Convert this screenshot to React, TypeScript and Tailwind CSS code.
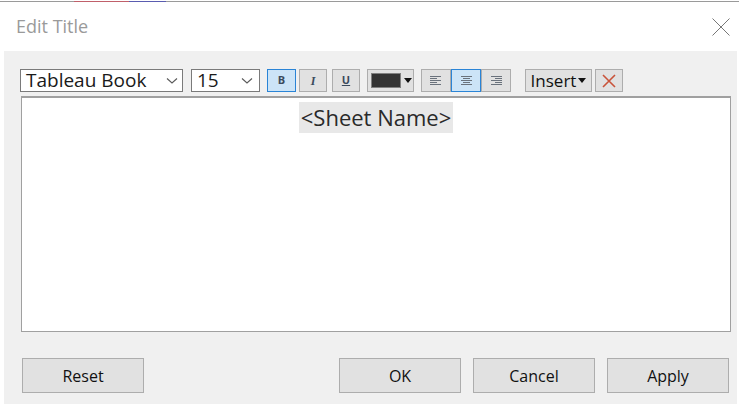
import React from "react";

// --- Small drawings ---

const Chevron = () => (
  <svg width="12" height="8" viewBox="0 0 12 8" className="shrink-0">
    <path d="M1 1.5 L6 6 L11 1.5" fill="none" stroke="#5a5a5a" strokeWidth="1.1" />
  </svg>
);

const Caret = () => (
  <svg width="8" height="5" viewBox="0 0 8 5" className="shrink-0">
    <path d="M0 0 H8 L4 5 Z" fill="#111" />
  </svg>
);

const AlignIcon = ({ mode }: { mode: "left" | "center" | "right" }) => {
  const rows = [11, 7, 11, 7, 11];
  return (
    <svg width="12" height="11" viewBox="0 0 12 11" shapeRendering="crispEdges">
      {rows.map((w, i) => {
        const x = mode === "left" ? 0 : mode === "right" ? 12 - w : Math.round((12 - w) / 2);
        return <rect key={i} x={x} y={i * 2 + 1} width={w} height="1" fill="#6a727c" />;
      })}
    </svg>
  );
};

// --- Sub-components ---

const ToolButton = ({
  children,
  active = false,
  className = "",
}: {
  children: React.ReactNode;
  active?: boolean;
  className?: string;
}) => (
  <div
    className={`flex h-[23px] items-center justify-center border ${
      active ? "border-[#2a84d6] bg-[#cce4f7]" : "border-[#adadad] bg-[#e1e1e1]"
    } ${className}`}
  >
    {children}
  </div>
);

const DialogButton = ({ label }: { label: string }) => (
  <div className="flex h-[35px] w-[122px] items-center justify-center border border-[#adadad] bg-[#e1e1e1] text-[16px] text-[#111]">
    {label}
  </div>
);

// --- Main Component ---

export default function App() {
  return (
    <div
      className="flex h-[405px] w-[739px] flex-col overflow-hidden bg-white"
      style={{ fontFamily: '"Open Sans", "Noto Sans", "Liberation Sans", sans-serif' }}
    >
      {/* edge of the window behind */}
      <div className="mt-px flex h-px">
        <div className="w-[74px] bg-[#9a9a9a]" />
        <div className="w-[55px] bg-[#c0606a]" />
        <div className="w-[37px] bg-[#5a5cb0]" />
        <div className="flex-1 bg-[#9a9a9a]" />
      </div>

      {/* Title bar */}
      <div className="flex h-[49px] items-center justify-between pl-4 pr-[9px]">
        <span className="text-[18px] text-[#9a9a9a]">Edit Title</span>
        <svg width="18" height="18" viewBox="0 0 18 18">
          <path d="M0.5 0.5 L17.5 17.5 M17.5 0.5 L0.5 17.5" stroke="#777" strokeWidth="1" />
        </svg>
      </div>

      {/* Body */}
      <div className="ml-1 mr-[2px] flex h-[353px] flex-col bg-[#f0f0f0] pt-[18px]">
        {/* Toolbar */}
        <div className="ml-4 flex items-center">
          <div className="flex h-[23px] w-[163px] items-center justify-between border border-[#7a7a7a] bg-white pl-[5px] pr-[4px] text-[19px] text-[#1a1a1a]">
            <span className="leading-none">Tableau Book</span>
            <Chevron />
          </div>
          <div className="ml-2 flex h-[23px] w-[69px] items-center justify-between border border-[#7a7a7a] bg-white pl-[5px] pr-[6px] text-[19px] text-[#1a1a1a]">
            <span className="leading-none">15</span>
            <Chevron />
          </div>

          <ToolButton active className="ml-[7px] w-[29px]">
            <span className="text-[11px] font-bold text-[#3b4a5c]">B</span>
          </ToolButton>
          <ToolButton className="ml-[3px] w-[28px]">
            <span
              className="text-[12px] font-bold italic text-[#3b4a5c]"
              style={{ fontFamily: '"Liberation Serif", serif' }}
            >
              I
            </span>
          </ToolButton>
          <ToolButton className="ml-[5px] w-[28px]">
            <span className="text-[11px] font-bold text-[#3b4a5c] underline">U</span>
          </ToolButton>

          <ToolButton className="ml-[7px] w-[47px] justify-start gap-[3px] pl-[3px]">
            <div className="h-[15px] w-[30px] border border-[#808080] bg-[#333]" />
            <Caret />
          </ToolButton>

          <div className="ml-[7px] flex">
            <ToolButton className="w-[30px]">
              <AlignIcon mode="left" />
            </ToolButton>
            <ToolButton active className="w-[30px]">
              <AlignIcon mode="center" />
            </ToolButton>
            <ToolButton className="w-[30px]">
              <AlignIcon mode="right" />
            </ToolButton>
          </div>

          <ToolButton className="ml-[14px] w-[67px] gap-[2px]">
            <span className="text-[17px] leading-none text-[#111]">Insert</span>
            <Caret />
          </ToolButton>
          <ToolButton className="ml-[3px] w-[28px]">
            <svg width="14" height="14" viewBox="0 0 14 14">
              <path d="M1 1 L13 13 M13 1 L1 13" stroke="#c9533a" strokeWidth="1.6" />
            </svg>
          </ToolButton>
        </div>

        {/* Editor */}
        <div className="mt-1 ml-[17px] flex h-[236px] w-[710px] flex-col items-center border border-t-2 border-[#a0a0a0] bg-white pt-[4px]">
          <span className="bg-[#e8e8e8] px-[2px] text-[22px] font-medium leading-[31px] text-[#2a2a2a]">
            &lt;Sheet Name&gt;
          </span>
        </div>

        {/* Footer buttons */}
        <div className="mt-[26px] flex items-center pl-[18px] pr-[8px]">
          <DialogButton label="Reset" />
          <div className="flex-1" />
          <div className="flex gap-3">
            <DialogButton label="OK" />
            <DialogButton label="Cancel" />
            <DialogButton label="Apply" />
          </div>
        </div>
      </div>
    </div>
  );
}
